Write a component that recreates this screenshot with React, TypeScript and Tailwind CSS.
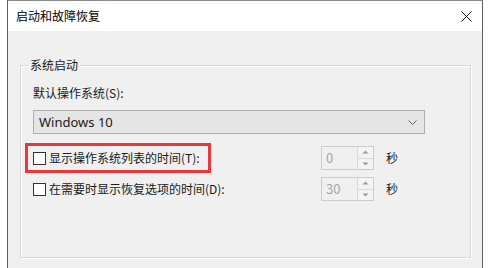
import React from 'react';

const Spinner = ({ value }: { value: string }) => (
  <div className="flex h-[24px] w-[53px] border border-[#cccccc] bg-[#f0f0f0]">
    <div className="flex flex-1 items-center pl-[4px] text-[13px] text-[#a6a6a6]">{value}</div>
    <div className="flex w-[16px] flex-col border-l border-[#dadada]">
      <div className="flex flex-1 items-center justify-center border-b border-[#dadada] bg-[#f4f4f4]">
        <svg width="7" height="4" viewBox="0 0 7 4">
          <path d="M0.5 3.5 L3.5 0.5 L6.5 3.5 Z" fill="#9a9a9a" />
        </svg>
      </div>
      <div className="flex flex-1 items-center justify-center bg-[#f4f4f4]">
        <svg width="7" height="4" viewBox="0 0 7 4">
          <path d="M0.5 0.5 L3.5 3.5 L6.5 0.5 Z" fill="#9a9a9a" />
        </svg>
      </div>
    </div>
  </div>
);

const Row = ({ label, value, className }: { label: string; value: string; className?: string }) => (
  <div className={`flex h-[24px] items-center ${className ?? ''}`}>
    <div className="flex w-[288px] items-center">
      <div className="h-[13px] w-[13px] border border-[#333333] bg-white" />
      <span className="ml-[3px] text-[12px] text-[#1a1a1a]">{label}</span>
    </div>
    <Spinner value={value} />
    <span className="ml-[12px] text-[12px] text-[#1a1a1a]">秒</span>
  </div>
);

export default function App() {
  return (
    <div className="h-[268px] w-[490px] overflow-hidden bg-white font-['Microsoft_YaHei','Noto_Sans_CJK_SC',sans-serif] leading-[16px]">
      <div className="ml-[7px] flex h-[268px] w-[476px] flex-col border-x border-t border-l-[#5f5f5f] border-r-[#5f5f5f] border-t-[#8a8a8a]">
        <div className="flex h-[30px] shrink-0 items-center justify-between bg-white pl-[8px] pr-[10px]">
          <span className="text-[12px] text-black">启动和故障恢复</span>
          <svg width="11" height="11" viewBox="0 0 11 11">
            <path d="M0.5 0.5 L10.5 10.5 M10.5 0.5 L0.5 10.5" stroke="#111" strokeWidth="1" />
          </svg>
        </div>
        <div className="flex-1 bg-[#f0f0f0] pl-[12px] pt-[34px]">
          <div className="relative h-[193px] w-[451px] border border-[#d8d8d8] pl-[12px] pt-[19px] shadow-[inset_1px_1px_0_#ffffff,1px_1px_0_#ffffff]">
            <span className="absolute -top-[9px] left-[7px] bg-[#f0f0f0] px-[2px] text-[12px] text-[#1a1a1a]">系统启动</span>
            <div className="text-[12px] text-[#1a1a1a]">默认操作系统(S):</div>
            <div className="mt-[9px] flex h-[24px] w-[392px] items-center justify-between border border-[#adadad] bg-[#e5e5e5] pl-[5px] pr-[7px]">
              <span className="font-['Noto_Sans',sans-serif] text-[13px] text-[#1a1a1a]">Windows 10</span>
              <svg width="9" height="5" viewBox="0 0 9 5">
                <path d="M0.5 0.5 L4.5 4.5 L8.5 0.5" fill="none" stroke="#606060" strokeWidth="1" />
              </svg>
            </div>
            <Row className="mt-[12px]" label="显示操作系统列表的时间(T):" value="0" />
            <Row className="mt-[7px]" label="在需要时显示恢复选项的时间(D):" value="30" />
            <div className="absolute left-[4px] top-[77px] h-[30px] w-[186px] border-[3px] border-[#e5393b]" />
          </div>
        </div>
      </div>
    </div>
  );
}
